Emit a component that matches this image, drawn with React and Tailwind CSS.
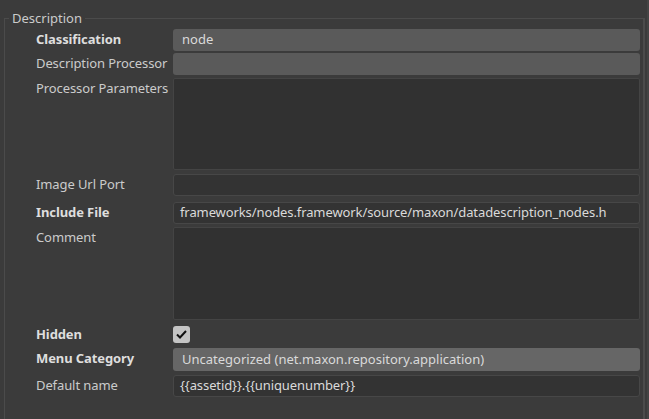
const font = { fontFamily: '"Noto Sans", "Open Sans", sans-serif' };

const Label = ({ children, bold }) => (
  <div
    className={`w-[137px] shrink-0 h-[22px] flex items-center text-[13px] tracking-[-0.1px] ${
      bold ? 'font-bold text-[#dedede]' : 'text-[#cbcbcb]'
    }`}
  >
    {children}
  </div>
);

const LightField = ({ children, tone = 'bg-[#5a5a5a]' }) => (
  <div className={`flex-1 h-full rounded-[3px] ${tone} flex items-center pl-[9px] text-[13px] text-[#dadada]`}>
    {children}
  </div>
);

const DarkField = ({ children }) => (
  <div className="flex-1 h-full rounded-[3px] bg-[#333333] border border-[#474747] flex items-center pl-[6px] text-[13px] tracking-[-0.1px] text-[#dadada] whitespace-nowrap overflow-hidden">
    {children}
  </div>
);

const TextArea = () => (
  <div className="flex-1 h-full rounded-[2px] bg-[#313131] border border-[#444444]" />
);

export default function App() {
  return (
    <div className="w-[649px] h-[419px] bg-[#3b3b3b] overflow-hidden flex" style={font}>
      <div className="flex-1 pl-[4px] pr-[2px] pt-[10px]">
        <fieldset className="border-t border-l border-r-2 border-[#4b4b4b] h-[420px]">
          <legend className="ml-[4px] px-[3px] text-[13px] leading-[16px] text-[#cbcbcb]">Description</legend>

          <div className="pl-[31px] pr-[3px] pt-[3px]">
            <div className="flex h-[22px]">
              <Label bold>Classification</Label>
              <LightField>node</LightField>
            </div>

            <div className="flex h-[22px] mt-[2px]">
              <Label>Description Processor</Label>
              <LightField />
            </div>

            <div className="flex h-[92px] mt-[3px]">
              <Label>Processor Parameters</Label>
              <TextArea />
            </div>

            <div className="flex h-[22px] mt-[4px]">
              <Label>Image Url Port</Label>
              <DarkField />
            </div>

            <div className="flex h-[22px] mt-[6px]">
              <Label bold>Include File</Label>
              <DarkField>frameworks/nodes.framework/source/maxon/datadescription_nodes.h</DarkField>
            </div>

            <div className="flex h-[93px] mt-[3px]">
              <Label>Comment</Label>
              <TextArea />
            </div>

            <div className="flex h-[17px] mt-[6px] items-center">
              <Label bold>Hidden</Label>
              <div className="w-[17px] h-[17px] rounded-[3px] bg-[#c4c4c4] flex items-center justify-center">
                <svg width="11" height="9" viewBox="0 0 11 9">
                  <path d="M1 4.5 L4 7.5 L10 1" fill="none" stroke="#111" strokeWidth="2" />
                </svg>
              </div>
            </div>

            <div className="flex h-[23px] mt-[5px]">
              <Label bold>Menu Category</Label>
              <LightField tone="bg-[#666666]">Uncategorized (net.maxon.repository.application)</LightField>
            </div>

            <div className="flex h-[22px] mt-[4px]">
              <Label>Default name</Label>
              <DarkField>{'{{assetid}}.{{uniquenumber}}'}</DarkField>
            </div>
          </div>
        </fieldset>
      </div>
      <div className="w-[2px] bg-[#444444]" />
    </div>
  );
}
